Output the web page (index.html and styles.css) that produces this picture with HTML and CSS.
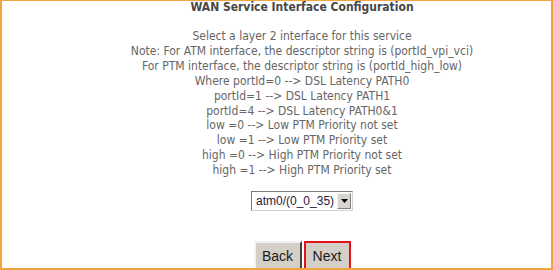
FILE: index.html
```html
<!DOCTYPE html>
<html>
<head>
<meta charset="utf-8">
<link rel="stylesheet" href="styles.css">
</head>
<body>
<div class="frame">
  <div class="content">
    <div class="title">WAN Service Interface Configuration</div>
    <div class="notes">
      <div>Select a layer 2 interface for this service</div>
      <div>Note: For ATM interface, the descriptor string is (portId_vpi_vci)</div>
      <div>For PTM interface, the descriptor string is (portId_high_low)</div>
      <div>Where portId=0 --&gt; DSL Latency PATH0</div>
      <div>portId=1 --&gt; DSL Latency PATH1</div>
      <div>portId=4 --&gt; DSL Latency PATH0&amp;1</div>
      <div>low =0 --&gt; Low PTM Priority not set</div>
      <div>low =1 --&gt; Low PTM Priority set</div>
      <div>high =0 --&gt; High PTM Priority not set</div>
      <div>high =1 --&gt; High PTM Priority set</div>
    </div>
    <div class="select">
      <span class="select-value">atm0/(0_0_35)</span>
      <span class="select-arrow"><svg width="7" height="4" viewBox="0 0 7 4"><path d="M0 0h7L3.5 4z" fill="#000"/></svg></span>
    </div>
    <div class="buttons">
      <button class="btn btn-back">Back</button>
      <button class="btn btn-next">Next</button>
    </div>
  </div>
</div>
</body>
</html>
```

FILE: styles.css
```css
html, body {
  margin: 0;
  padding: 0;
  background: #fff;
}
.frame {
  box-sizing: border-box;
  width: 553px;
  height: 270px;
  border: 2px solid #f2a443;
  border-top-width: 1px;
  overflow: hidden;
}
.content {
  display: flex;
  flex-direction: column;
  align-items: center;
  padding-left: 51px;
  font-family: "DejaVu Sans Condensed", "DejaVu Sans", sans-serif;
}
.title {
  font-weight: bold;
  font-size: 12px;
  line-height: 13px;
  color: #474747;
}
.notes {
  margin-top: 15px;
  font-size: 12px;
  line-height: 14.9px;
  color: #666;
  text-align: center;
}
.select {
  margin-top: 13px;
  display: flex;
  align-items: center;
  width: 102px;
  height: 20px;
  box-sizing: border-box;
  border: 1px solid #7a7a7a;
  border-right-color: #d0d0d0;
  border-bottom-color: #d0d0d0;
  background: #fff;
  font-family: "Liberation Sans", Arial, sans-serif;
  font-size: 12px;
  color: #2a2040;
}
.select-value {
  flex: 1;
  padding-left: 4px;
  white-space: nowrap;
}
.select-arrow {
  width: 14px;
  height: 16px;
  margin-right: 1px;
  box-sizing: border-box;
  background: #d8d5cf;
  border: 1px solid #f4f4f4;
  border-right-color: #808080;
  border-bottom-color: #808080;
  display: flex;
  align-items: center;
  justify-content: center;
}
.buttons {
  margin-top: 30px;
  display: flex;
  gap: 2px;
}
.btn {
  font-family: "Liberation Sans", Arial, sans-serif;
  font-size: 14px;
  color: #1a1a1a;
  background: #d4d0c8;
  height: 30px;
  padding: 0;
  box-sizing: border-box;
  border: 2px solid;
  border-color: #f4f4f4 #404040 #404040 #f4f4f4;
}
.btn-back {
  width: 48px;
}
.btn-next {
  width: 47px;
  border: 2px solid #e0141a;
}
```
